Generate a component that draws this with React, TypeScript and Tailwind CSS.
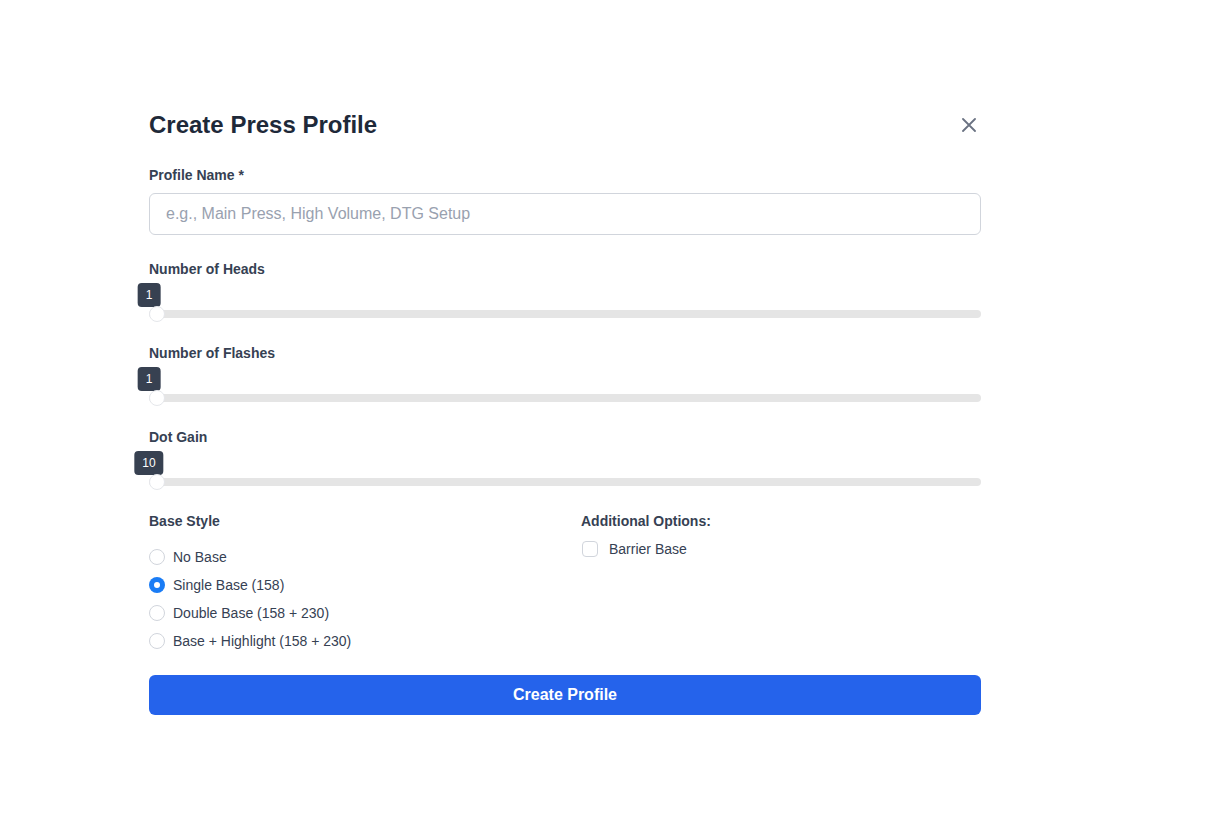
import { useState } from "react";

type SliderProps = {
  label: string;
  value: number;
};

function Slider({ label, value }: SliderProps) {
  return (
    <div className="mb-[21px]">
      <label className="block text-sm font-semibold leading-5 text-gray-700">
        {label}
      </label>
      <div className="relative pt-[27px]">
        <span className="absolute left-0 top-[4px] -translate-x-1/2 rounded bg-[#374151] px-2 py-1 text-xs leading-4 text-white">
          {value}
        </span>
        <div className="relative flex h-4 items-center">
          <div className="h-2 w-full rounded-full bg-[#e5e5e5]" />
          <div className="absolute left-0 top-0 h-4 w-4 rounded-full border border-gray-200 bg-white" />
        </div>
      </div>
    </div>
  );
}

const baseStyles = [
  "No Base",
  "Single Base (158)",
  "Double Base (158 + 230)",
  "Base + Highlight (158 + 230)",
];

export default function App() {
  const [base, setBase] = useState(1);
  const [barrier, setBarrier] = useState(false);

  return (
    <div
      className="min-h-screen bg-white"
      style={{ fontFamily: '"Liberation Sans", Arial, sans-serif' }}
    >
      <div className="ml-[149px] w-[832px] pt-[109px]">
        <div className="mb-6 flex items-center justify-between">
          <h2 className="text-2xl font-bold leading-8 text-gray-800">
            Create Press Profile
          </h2>
          <button className="flex h-6 w-6 items-center justify-center text-gray-500">
            <svg width="14" height="14" viewBox="0 0 14 14" fill="none">
              <path
                d="M1 1l12 12M13 1L1 13"
                stroke="currentColor"
                strokeWidth="1.8"
                strokeLinecap="round"
              />
            </svg>
          </button>
        </div>

        <label className="mb-2 block text-sm font-semibold leading-5 text-gray-700">
          Profile Name *
        </label>
        <input
          type="text"
          placeholder="e.g., Main Press, High Volume, DTG Setup"
          className="mb-6 block h-[42px] w-full rounded-md border border-gray-300 px-4 text-base text-gray-700 placeholder:text-gray-400 focus:outline-none"
        />

        <Slider label="Number of Heads" value={1} />
        <Slider label="Number of Flashes" value={1} />
        <Slider label="Dot Gain" value={10} />

        <div className="grid grid-cols-2 gap-8">
          <div>
            <div className="mb-4 text-sm font-semibold leading-5 text-gray-700">
              Base Style
            </div>
            <div className="flex flex-col gap-2">
              {baseStyles.map((s, i) => (
                <label
                  key={s}
                  className="flex cursor-pointer items-center gap-2 text-sm leading-5 text-gray-700"
                  onClick={() => setBase(i)}
                >
                  {base === i ? (
                    <span className="flex h-4 w-4 items-center justify-center rounded-full bg-[#1a7cf5]">
                      <span className="h-1.5 w-1.5 rounded-full bg-white" />
                    </span>
                  ) : (
                    <span className="h-4 w-4 rounded-full border border-gray-300 bg-white" />
                  )}
                  {s}
                </label>
              ))}
            </div>
          </div>
          <div>
            <div className="mb-2 text-sm font-semibold leading-5 text-gray-700">
              Additional Options:
            </div>
            <label
              className="flex cursor-pointer items-center gap-[11px] pl-px text-sm leading-5 text-gray-700"
              onClick={() => setBarrier(!barrier)}
            >
              <span
                className={
                  barrier
                    ? "h-4 w-4 rounded border border-[#1a7cf5] bg-[#1a7cf5]"
                    : "h-4 w-4 rounded border border-gray-300 bg-white"
                }
              />
              Barrier Base
            </label>
          </div>
        </div>

        <button className="mt-6 flex h-10 w-full items-center justify-center rounded-md bg-[#2563eb] text-base font-bold text-white">
          Create Profile
        </button>
      </div>
    </div>
  );
}
